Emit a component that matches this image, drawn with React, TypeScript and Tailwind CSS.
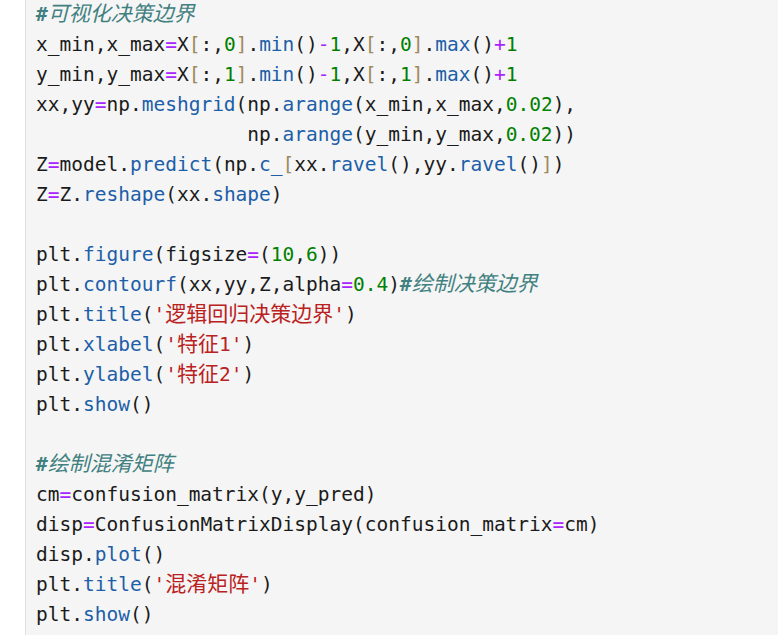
type Tok = [string, string];

// token kinds -> tailwind classes
const K: Record<string, string> = {
  t: "text-[#1b1b1b]",
  o: "text-[#aa22ff]",
  n: "text-[#008000]",
  b: "text-[#9c8a5e]",
  f: "text-[#1c5ea8]",
  s: "text-[#ba2121]",
  c: "text-[#408080] italic",
};

const cjk = /[\u4e00-\u9fff]/;

const lines: Tok[][] = [
  [["c", "#可视化决策边界"]],
  [["t", "x_min,x_max"], ["o", "="], ["t", "X"], ["b", "["], ["t", ":,"], ["n", "0"], ["b", "]"], ["t", "."], ["f", "min"], ["t", "()"], ["o", "-"], ["n", "1"], ["t", ",X"], ["b", "["], ["t", ":,"], ["n", "0"], ["b", "]"], ["t", "."], ["f", "max"], ["t", "()"], ["o", "+"], ["n", "1"]],
  [["t", "y_min,y_max"], ["o", "="], ["t", "X"], ["b", "["], ["t", ":,"], ["n", "1"], ["b", "]"], ["t", "."], ["f", "min"], ["t", "()"], ["o", "-"], ["n", "1"], ["t", ",X"], ["b", "["], ["t", ":,"], ["n", "1"], ["b", "]"], ["t", "."], ["f", "max"], ["t", "()"], ["o", "+"], ["n", "1"]],
  [["t", "xx,yy"], ["o", "="], ["t", "np."], ["f", "meshgrid"], ["t", "(np."], ["f", "arange"], ["t", "(x_min,x_max,"], ["n", "0.02"], ["t", "),"]],
  [["t", "                  np."], ["f", "arange"], ["t", "(y_min,y_max,"], ["n", "0.02"], ["t", "))"]],
  [["t", "Z"], ["o", "="], ["t", "model."], ["f", "predict"], ["t", "(np."], ["f", "c_"], ["b", "["], ["t", "xx."], ["f", "ravel"], ["t", "(),yy."], ["f", "ravel"], ["t", "()"], ["b", "]"], ["t", ")"]],
  [["t", "Z"], ["o", "="], ["t", "Z."], ["f", "reshape"], ["t", "(xx."], ["f", "shape"], ["t", ")"]],
  [],
  [["t", "plt."], ["f", "figure"], ["t", "(figsize"], ["o", "="], ["t", "("], ["n", "10"], ["t", ","], ["n", "6"], ["t", "))"]],
  [["t", "plt."], ["f", "contourf"], ["t", "(xx,yy,Z,alpha"], ["o", "="], ["n", "0.4"], ["t", ")"], ["c", "#绘制决策边界"]],
  [["t", "plt."], ["f", "title"], ["t", "("], ["s", "'逻辑回归决策边界'"], ["t", ")"]],
  [["t", "plt."], ["f", "xlabel"], ["t", "("], ["s", "'特征1'"], ["t", ")"]],
  [["t", "plt."], ["f", "ylabel"], ["t", "("], ["s", "'特征2'"], ["t", ")"]],
  [["t", "plt."], ["f", "show"], ["t", "()"]],
  [],
  [["c", "#绘制混淆矩阵"]],
  [["t", "cm"], ["o", "="], ["t", "confusion_matrix(y,y_pred)"]],
  [["t", "disp"], ["o", "="], ["t", "ConfusionMatrixDisplay(confusion_matrix"], ["o", "="], ["t", "cm)"]],
  [["t", "disp."], ["f", "plot"], ["t", "()"]],
  [["t", "plt."], ["f", "title"], ["t", "("], ["s", "'混淆矩阵'"], ["t", ")"]],
  [["t", "plt."], ["f", "show"], ["t", "()"]],
];

// split a token so CJK runs get a slightly larger size, without moving the baseline
const Piece = ({ kind, text }: { kind: string; text: string }) => {
  const parts = text.split(/([\u4e00-\u9fff]+)/).filter((p) => p.length > 0);
  return (
    <span className={K[kind]}>
      {parts.map((p, i) =>
        cjk.test(p) ? (
          <span
            key={i}
            className="text-[21px] leading-none font-['Noto_Sans_CJK_SC',sans-serif] font-normal"
          >
            {p}
          </span>
        ) : kind === "c" && p.startsWith("#") ? (
          <span key={i} className="font-bold">
            {p}
          </span>
        ) : (
          <span key={i}>{p}</span>
        )
      )}
    </span>
  );
};

export default function App() {
  return (
    <div className="flex w-[778px] h-[635px] bg-white overflow-hidden">
      <div className="w-[25px] shrink-0" />
      <div className="flex-1 border-l border-[#e0e0e0] bg-[#f5f5f5] pl-[10px]">
        <div className="font-['DejaVu_Sans_Mono','Noto_Sans_CJK_SC',monospace] text-[19.5px] leading-[30px]">
          {lines.map((line, i) => (
            <div key={i} className="h-[30px] whitespace-pre">
              {line.map(([kind, text], j) => (
                <Piece key={j} kind={kind} text={text} />
              ))}
            </div>
          ))}
        </div>
      </div>
    </div>
  );
}
